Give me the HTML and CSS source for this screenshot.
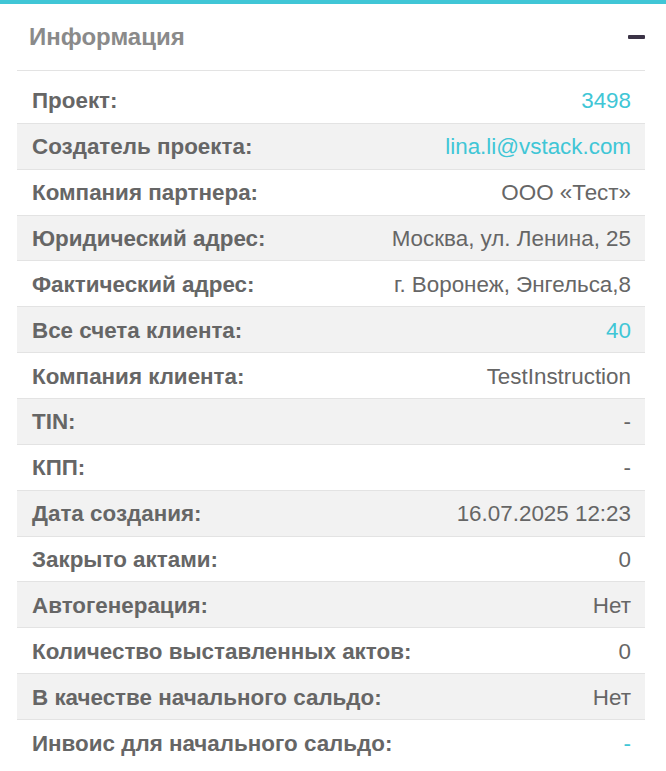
FILE: index.html
```html
<!DOCTYPE html>
<html lang="ru">
<head>
    <meta charset="UTF-8">
    <meta name="viewport" content="width=device-width, initial-scale=1.0">
    <title>Информация</title>

    <link rel="stylesheet" href="styles.css">
</head>
<body>

<div class="panel">
    <div class="panel-head">
        <span class="panel-title">Информация</span>
        <span class="collapse"></span>
    </div>

    <!-- список свойств проекта -->
    <div class="props">
        <div class="row"><span class="label">Проект:</span><a class="value link" href="#">3498</a></div>
        <div class="row"><span class="label">Создатель проекта:</span><a class="value link" href="#">lina.li@vstack.com</a></div>
        <div class="row"><span class="label">Компания партнера:</span><span class="value">ООО «Тест»</span></div>
        <div class="row"><span class="label">Юридический адрес:</span><span class="value">Москва, ул. Ленина, 25</span></div>
        <div class="row"><span class="label">Фактический адрес:</span><span class="value">г. Воронеж, Энгельса,8</span></div>
        <div class="row"><span class="label">Все счета клиента:</span><a class="value link" href="#">40</a></div>
        <div class="row"><span class="label">Компания клиента:</span><span class="value">TestInstruction</span></div>
        <div class="row"><span class="label">TIN:</span><span class="value">-</span></div>
        <div class="row"><span class="label">КПП:</span><span class="value">-</span></div>
        <div class="row"><span class="label">Дата создания:</span><span class="value">16.07.2025 12:23</span></div>
        <div class="row"><span class="label">Закрыто актами:</span><span class="value">0</span></div>
        <div class="row"><span class="label">Автогенерация:</span><span class="value">Нет</span></div>
        <div class="row"><span class="label">Количество выставленных актов:</span><span class="value">0</span></div>
        <div class="row"><span class="label">В качестве начального сальдо:</span><span class="value">Нет</span></div>
        <div class="row"><span class="label">Инвоис для начального сальдо:</span><a class="value link" href="#">-</a></div>
    </div>
</div>

</body>
</html>
```

FILE: styles.css
```css
body {
    margin: 0;
    background-color: #fff;
    font-family: "Liberation Sans", Arial, sans-serif;
}
.panel {
    border-top: 4px solid #40c6d6;
    padding: 0 21px 0 17px;
}
.panel-head {
    display: flex;
    align-items: center;
    justify-content: space-between;
    height: 66px;
    padding-left: 12px;
    border-bottom: 1px solid #e3e3e3;
}
.panel-title {
    font-size: 24px;
    font-weight: bold;
    color: #8a8a8a;
}
.collapse {
    width: 17px;
    height: 4px;
    border-radius: 1px;
    background-color: #3b3346;
}
.props {
    margin-top: 7px;
}
.row {
    display: flex;
    justify-content: space-between;
    align-items: center;
    height: 45.86px;
    box-sizing: border-box;
    padding: 2px 14px 0 15px;
    border-bottom: 1px solid #e3e3e3;
    font-size: 22.4px;
    color: #666;
}
.row:nth-child(even) {
    background-color: #f2f2f2;
}
.row:last-child {
    border-bottom: none;
}
.label {
    font-weight: bold;
}
.value {
    text-decoration: none;
}
.link {
    color: #40c6d6;
}
```
